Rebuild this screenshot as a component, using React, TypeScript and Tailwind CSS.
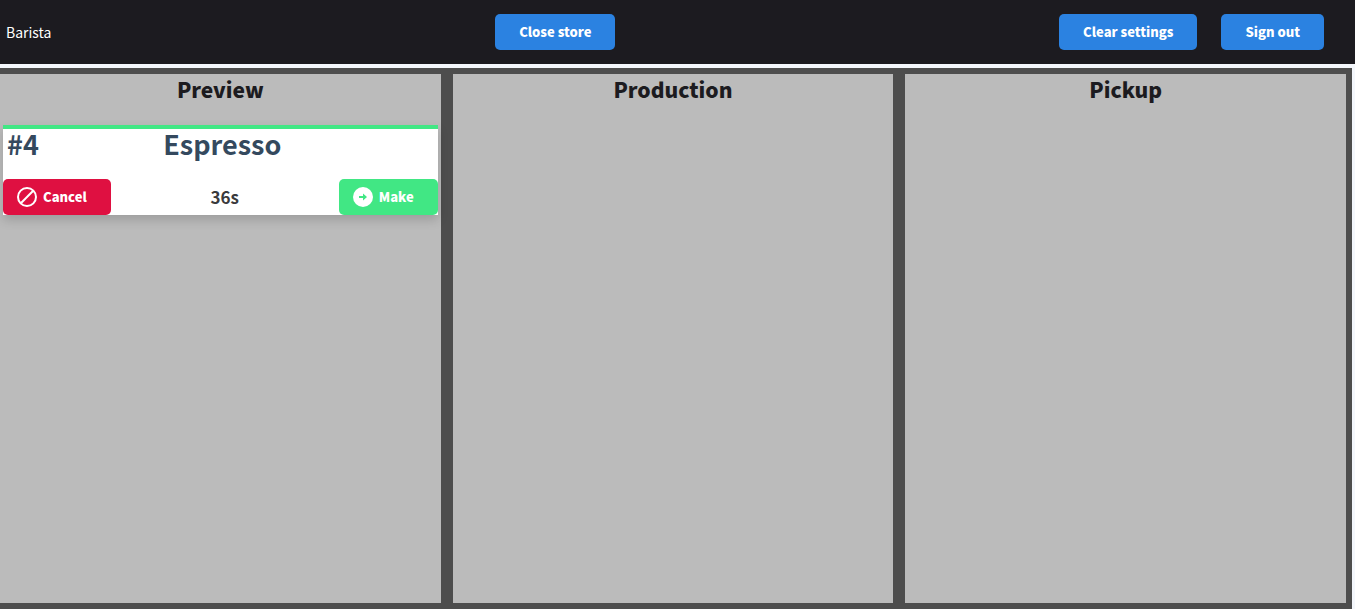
import React from "react";

const actionClass =
  "h-9 rounded-[5px] bg-[#2b82e1] px-6 text-[13px] leading-9 font-black text-white cursor-pointer";

function CancelIcon() {
  return (
    <svg width="20" height="20" viewBox="0 0 20 20" fill="none" stroke="currentColor" strokeWidth="2" aria-hidden="true">
      <circle cx="10" cy="10" r="9" />
      <path d="M3.8 16.2 16.2 3.8" />
    </svg>
  );
}

function MakeIcon() {
  return (
    <svg width="20" height="20" viewBox="0 0 20 20" aria-hidden="true">
      <circle cx="10" cy="10" r="10" fill="currentColor" />
      <path d="M6 9h4V6.4L14 10l-4 3.6V11H6z" fill="#41e784" />
    </svg>
  );
}

function Order({ id, name, age }: { id: number; name: string; age: string }) {
  return (
    <article className="border-t-4 border-[#41e784] bg-white shadow-[0_5px_10px_rgba(0,0,0,0.16)]">
      <div className="grid h-[50px] grid-cols-[1fr_auto_1fr] pl-1 text-[27px] leading-[30px] font-bold text-[#34495e]">
        <span>#{id}</span>
        <h3>{name}</h3>
      </div>
      <div className="flex items-center justify-between">
        <button type="button" className="flex h-9 cursor-pointer items-center gap-1.5 rounded-[5px] bg-[#df1041] pr-6 pl-3.5 text-[13px] leading-[22px] font-black text-white">
          <CancelIcon />
          Cancel
        </button>
        <span className="text-[17px] leading-6 font-bold text-[#3a3a3c]">{age}</span>
        <button type="button" className="flex h-9 cursor-pointer items-center gap-1.5 rounded-[5px] bg-[#41e784] pr-6 pl-3.5 text-[13px] leading-[22px] font-black text-white">
          <MakeIcon />
          Make
        </button>
      </div>
    </article>
  );
}

function Column({ title, children }: { title: string; children?: React.ReactNode }) {
  return (
    <section className="bg-[#bbbbbb] px-[3px]">
      <h2 className="mb-[21px] text-center text-[21px] leading-[30px] font-black text-[#1c1b20]">{title}</h2>
      {children}
    </section>
  );
}

export default function App() {
  return (
    <div className="flex min-h-screen flex-col bg-[#f4f7fc] font-['Noto_Sans_CJK_JP','Noto_Sans',sans-serif]">
      <header className="mb-1 flex h-16 items-center justify-between bg-[#1c1b20] pr-[31px] pl-1.5 text-white">
        <div className="text-sm">Barista</div>
        <button type="button" className={actionClass}>Close store</button>
        <div className="flex gap-6">
          <button type="button" className={actionClass}>Clear settings</button>
          <button type="button" className={actionClass}>Sign out</button>
        </div>
      </header>
      <main className="mr-[3px] grid flex-1 grid-cols-3 gap-3 bg-[#4d4d4d] py-1.5 pr-1.5">
        <Column title="Preview">
          <Order id={4} name="Espresso" age="36s" />
        </Column>
        <Column title="Production" />
        <Column title="Pickup" />
      </main>
    </div>
  );
}
